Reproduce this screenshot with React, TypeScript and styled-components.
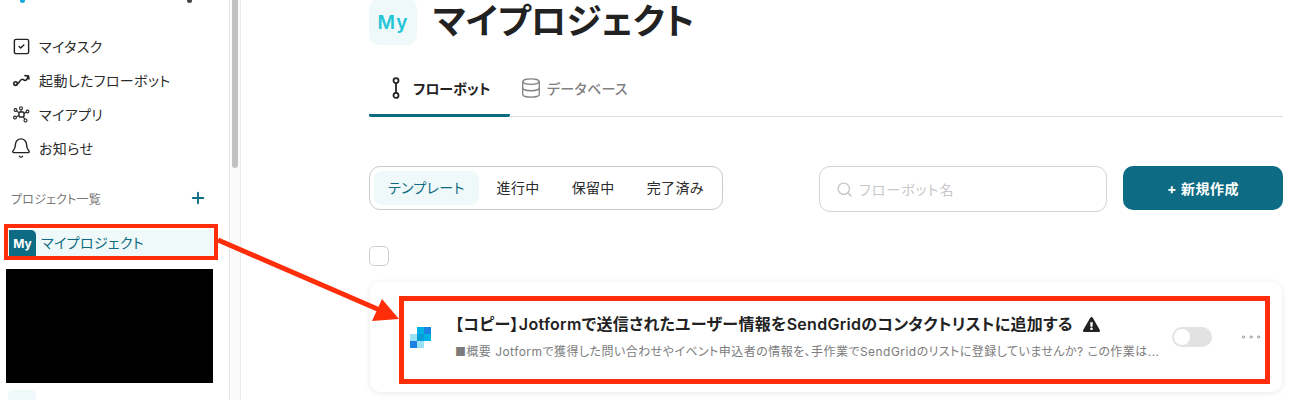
import React from 'react';
import styled, {createGlobalStyle} from 'styled-components';
import {Database, Search, SquareCheck, Bell, Plus, Ellipsis} from 'lucide-react';
import {FaExclamationTriangle} from 'react-icons/fa';

const GlobalStyle = createGlobalStyle`
    html, body {
        margin: 0;
        padding: 0;
        height: 400px;
        overflow: hidden;
        background: #fff;
    }
    body {
        font-family: Inter, "Noto Sans CJK JP", sans-serif;
        font-feature-settings: "palt";
        color: #222;
    }
    * {
        box-sizing: border-box;
    }
`;

const Page = styled.div`
    position: relative;
    display: flex;
    width: 1292px;
    height: 400px;
    overflow: hidden;
`;

const Sidebar = styled.aside`
    flex: none;
    width: 230px;
    height: 400px;
    padding: 0 16px 0 0;
    border-right: 1px solid #e6e6e6;
    overflow: hidden;
`;

const LogoRow = styled.div`
    display: flex;
    justify-content: space-between;
    height: 29px;
    padding: 0 21px 0 20px;
`;

const LogoDot = styled.span`
    width: 5px;
    height: 3px;
    border-radius: 0 0 3px 3px;
    background: ${(props: {$color: string}) => props.$color};
`;

const Menu = styled.nav`
    display: flex;
    flex-direction: column;
`;

const MenuItem = styled.div`
    display: flex;
    align-items: center;
    gap: 10px;
    height: 34px;
    padding-left: 13px;
    font-size: 14px;
    letter-spacing: 0.4px;
    color: #2b2b2b;
`;

const MenuIcon = styled.span`
    flex: none;
    display: flex;
    align-items: center;
    justify-content: center;
    width: 16px;
    height: 20px;
    svg {
        flex: none;
    }
`;

const ProjectHeader = styled.div`
    display: flex;
    align-items: center;
    justify-content: space-between;
    height: 24px;
    margin-top: 21px;
    padding: 0 6px 0 11px;
    font-size: 12px;
    letter-spacing: 0.2px;
    color: #777;
    svg {
        color: #0d6b84;
    }
`;

const ProjectRow = styled.div`
    display: flex;
    align-items: center;
    gap: 5px;
    width: 206px;
    height: 27px;
    margin: 20px 0 0 9px;
    background: #f0f9f9;
    font-size: 14px;
    line-height: 25px;
    letter-spacing: 0.4px;
    color: #0d6b84;
`;

const ProjectName = styled.span`
    height: 27px;
`;

const ProjectBadge = styled.span`
    display: flex;
    align-items: center;
    justify-content: center;
    width: 27px;
    height: 27px;
    border-radius: 0 5px 0 0;
    background: #0d6b84;
    color: #fff;
    font-size: 12px;
    font-weight: 700;
    letter-spacing: 0;
`;

const Redacted = styled.div`
    width: 207px;
    height: 114px;
    margin: 12px 0 0 6px;
    background: #000;
`;

const NextBadge = styled.div`
    width: 28px;
    height: 28px;
    margin: 7px 0 0 8px;
    border-radius: 5px;
    background: #f0f9f9;
`;

const Scrollbar = styled.div`
    flex: none;
    width: 11px;
    height: 400px;
    padding: 0 2px;
    background: #fafafa;
    border-right: 1px solid #ececec;
`;

const ScrollThumb = styled.div`
    width: 6px;
    height: 168px;
    border-radius: 0 0 3px 3px;
    background: #c2c2c2;
`;

const Main = styled.main`
    flex: 1;
    min-width: 0;
    padding: 0 9px 0 128px;
`;

const TitleRow = styled.header`
    display: flex;
    align-items: center;
    gap: 16px;
    height: 46px;
    margin-top: -1px;
`;

const TitleIcon = styled.div`
    display: flex;
    align-items: center;
    justify-content: center;
    width: 48px;
    height: 46px;
    border-radius: 10px;
    background: #f0f9f9;
    color: #22c5d8;
    font-size: 19px;
    font-weight: 600;
    letter-spacing: 1px;
`;

const Title = styled.h1`
    margin: 0;
    font-size: 35.5px;
    line-height: 46px;
    font-weight: 700;
    color: #222;
`;

const Tabs = styled.div`
    display: flex;
    height: 73px;
    margin-top: -1px;
    padding-top: 23px;
    border-bottom: 1px solid #dedede;
`;

const Tab = styled.div<{$active?: boolean}>`
    display: flex;
    align-items: center;
    gap: ${props => (props.$active ? '12px' : '5px')};
    width: ${props => (props.$active ? '141px' : 'auto')};
    height: 50px;
    margin-bottom: -1px;
    padding: 0 0 6px ${props => (props.$active ? '22px' : '10px')};
    font-size: 14px;
    font-weight: ${props => (props.$active ? 700 : 500)};
    letter-spacing: ${props => (props.$active ? '0' : '0.3px')};
    color: ${props => (props.$active ? '#222' : '#808080')};
    border-bottom: 3px solid ${props => (props.$active ? '#0d6b84' : 'transparent')};
    border-radius: 0 0 2px 2px;
`;

const Toolbar = styled.div`
    display: flex;
    align-items: flex-start;
    margin-top: 49px;
`;

const Filters = styled.div`
    display: flex;
    align-items: center;
    gap: 4px;
    height: 44px;
    padding: 0 4px;
    border: 1px solid #c9c9c9;
    border-radius: 11px;
`;

const Filter = styled.div<{$active?: boolean}>`
    display: flex;
    align-items: center;
    height: 34px;
    padding: 0 14px 2px;
    border-radius: 8px;
    font-size: 14px;
    letter-spacing: 0.35px;
    color: ${props => (props.$active ? '#0d6b84' : '#2b2b2b')};
    background: ${props => (props.$active ? '#f0f9f9' : 'transparent')};
`;

const SearchBox = styled.div`
    display: flex;
    align-items: center;
    gap: 6px;
    width: 288px;
    height: 46px;
    margin-left: auto;
    padding-left: 16px;
    border: 1px solid #ced3dc;
    border-radius: 11px;
    font-size: 14px;
    letter-spacing: 1px;
    color: #c8c8c8;
    svg {
        color: #c8c8c8;
    }
`;

const NewButton = styled.button`
    width: 160px;
    height: 44px;
    margin-left: 16px;
    border: none;
    border-radius: 10px;
    background: #0d6b84;
    color: #fff;
    font-family: inherit;
    font-feature-settings: inherit;
    font-size: 14px;
    font-weight: 700;
    letter-spacing: 0.5px;
`;

const SelectBox = styled.div`
    width: 20px;
    height: 20px;
    margin-top: 34px;
    border: 1px solid #cfcfcf;
    border-radius: 5px;
`;

const Card = styled.article`
    display: flex;
    align-items: center;
    width: 912px;
    height: 110px;
    margin: 16px 0 0 1px;
    padding: 0 20px 0 40px;
    border-radius: 10px;
    background: #fff;
    box-shadow: 0 1px 6px rgba(0, 0, 0, 0.09);
`;

const CardLogo = styled.svg`
    flex: none;
    width: 21px;
    height: 21px;
`;

const CardBody = styled.div`
    flex: none;
    display: flex;
    flex-direction: column;
    gap: 10px;
    width: 717px;
    margin-left: 24px;
`;

const CardTitle = styled.div`
    display: flex;
    align-items: center;
    gap: 10px;
    font-size: 16px;
    line-height: 20px;
    font-weight: 600;
    letter-spacing: 0.3px;
    color: #222;
`;

const CardText = styled.div`
    font-size: 12px;
    line-height: 16px;
    letter-spacing: 0.45px;
    color: #7c7c7c;
    white-space: nowrap;
`;

const Toggle = styled.div`
    flex: none;
    width: 40px;
    height: 20px;
    padding: 2px;
    border-radius: 10px;
    background: #e2e2e2;
`;

const ToggleKnob = styled.div`
    width: 16px;
    height: 16px;
    border-radius: 50%;
    background: #fff;
`;

const MoreButton = styled.div`
    flex: none;
    display: flex;
    margin-left: 26px;
    color: #999;
`;

const Highlight = styled.div<{$x: number; $y: number; $w: number; $h: number; $line: number}>`
    position: absolute;
    left: ${props => props.$x}px;
    top: ${props => props.$y}px;
    width: ${props => props.$w}px;
    height: ${props => props.$h}px;
    border: ${props => props.$line}px solid #ff2d0a;
    pointer-events: none;
`;

const ArrowLayer = styled.svg`
    position: absolute;
    left: 0;
    top: 0;
    pointer-events: none;
`;

const RouteIcon = () => (
    <svg width="17" height="14" viewBox="0 0 17 14" fill="none" stroke="#222" strokeWidth="1.6" strokeLinecap="round" strokeLinejoin="round">
        <circle cx="2.6" cy="10.6" r="1.8" />
        <path d="M4.4 10.6c2.2 0 2.2-4.4 4.8-4.4 1.6 0 1.6 1.6 3 1.2 1.4-.4 2.4-2.2 3-4.2" />
        <path d="M12 2.6l3.4.4.6 3" />
    </svg>
);

const NetworkIcon = () => (
    <svg width="17" height="17" viewBox="0 0 17 17" fill="none" stroke="#222" strokeWidth="1.1">
        <rect x="6" y="6" width="5" height="5" rx="1" strokeWidth="1.4" />
        <circle cx="8" cy="2.2" r="1.5" />
        <circle cx="14.5" cy="5.5" r="1.4" />
        <circle cx="2.5" cy="4" r="1.4" />
        <circle cx="2" cy="11.5" r="1.4" />
        <circle cx="12.5" cy="14.5" r="1.5" />
        <path d="M8 3.7V6M13.2 6.2L11 7.4M3.6 5L6 6.6M3.3 10.8L6 9.6M11.8 13.1L10.2 11" />
    </svg>
);

const FlowIcon = () => (
    <svg width="10" height="22" viewBox="0 0 10 22" fill="none" stroke="#222" strokeWidth="1.8">
        <circle cx="5" cy="3.6" r="2.5" />
        <circle cx="5" cy="18.4" r="2.5" />
        <path d="M5 6v10" />
    </svg>
);

const SendGridLogo = () => (
    <CardLogo viewBox="0 0 21 21">
        <rect x="7" y="0" width="7" height="7" fill="#00b2e3" />
        <rect x="14" y="0" width="7" height="7" fill="#1a82e2" />
        <rect x="0" y="7" width="7" height="7" fill="#99e1f4" />
        <rect x="7" y="7" width="7" height="7" fill="#009dd9" />
        <rect x="14" y="7" width="7" height="7" fill="#00b2e3" />
        <rect x="0" y="14" width="7" height="7" fill="#1a82e2" />
        <rect x="7" y="14" width="7" height="7" fill="#99e1f4" />
    </CardLogo>
);

const App = () => {
    return (
        <Page>
            <GlobalStyle />
            <Sidebar>
                <LogoRow>
                    <LogoDot $color="#1ba8e0" />
                    <LogoDot $color="#444" />
                </LogoRow>
                <Menu>
                    <MenuItem><MenuIcon><SquareCheck size={19} strokeWidth={1.8} color="#222" /></MenuIcon>マイタスク</MenuItem>
                    <MenuItem><MenuIcon><RouteIcon /></MenuIcon>起動したフローボット</MenuItem>
                    <MenuItem><MenuIcon><NetworkIcon /></MenuIcon>マイアプリ</MenuItem>
                    <MenuItem><MenuIcon><Bell size={22} strokeWidth={1.5} color="#222" /></MenuIcon>お知らせ</MenuItem>
                </Menu>
                <ProjectHeader>
                    プロジェクト一覧
                    <Plus size={18} strokeWidth={2.5} />
                </ProjectHeader>
                <ProjectRow>
                    <ProjectBadge>My</ProjectBadge>
                    <ProjectName>マイプロジェクト</ProjectName>
                </ProjectRow>
                <Redacted />
                <NextBadge />
            </Sidebar>
            <Scrollbar>
                <ScrollThumb />
            </Scrollbar>
            <Main>
                <TitleRow>
                    <TitleIcon>My</TitleIcon>
                    <Title>マイプロジェクト</Title>
                </TitleRow>
                <Tabs>
                    <Tab $active><FlowIcon />フローボット</Tab>
                    <Tab><Database size={22} strokeWidth={1.4} />データベース</Tab>
                </Tabs>
                <Toolbar>
                    <Filters>
                        <Filter $active>テンプレート</Filter>
                        <Filter>進行中</Filter>
                        <Filter>保留中</Filter>
                        <Filter>完了済み</Filter>
                    </Filters>
                    <SearchBox>
                        <Search size={17} strokeWidth={2} />
                        フローボット名
                    </SearchBox>
                    <NewButton>+ 新規作成</NewButton>
                </Toolbar>
                <SelectBox />
                <Card>
                    <SendGridLogo />
                    <CardBody>
                        <CardTitle>
                            【コピー】Jotformで送信されたユーザー情報をSendGridのコンタクトリストに追加する
                            <FaExclamationTriangle size={17} color="#222" />
                        </CardTitle>
                        <CardText>■概要 Jotformで獲得した問い合わせやイベント申込者の情報を、手作業でSendGridのリストに登録していませんか? この作業は...</CardText>
                    </CardBody>
                    <Toggle><ToggleKnob /></Toggle>
                    <MoreButton><Ellipsis size={26} strokeWidth={0.9} /></MoreButton>
                </Card>
            </Main>
            <Highlight $x={4} $y={224} $w={214} $h={36} $line={4} />
            <Highlight $x={399} $y={296} $w={871} $h={88} $line={5} />
            <ArrowLayer width="1292" height="400" viewBox="0 0 1292 400">
                <line x1="218" y1="240" x2="382" y2="311" stroke="#ff2d0a" strokeWidth="5" />
                <polygon points="382,299 372,321 399,319" fill="#ff2d0a" />
            </ArrowLayer>
        </Page>
    );
};

export default App;
